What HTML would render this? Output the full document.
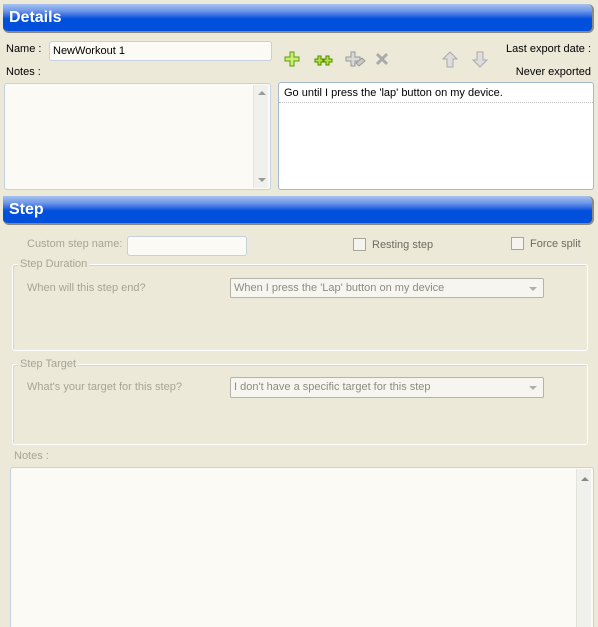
<!DOCTYPE html>
<html style="overflow:hidden;height:627px"><head><meta charset="utf-8"><style>
*{box-sizing:border-box}
body{margin:0;width:598px;height:627px;background:#ece9d8;font-family:"Liberation Sans",sans-serif;font-size:11px;color:#000;position:relative;overflow:hidden}
.a{position:absolute}
.hdr{position:absolute;left:3px;width:591px;height:29px;border-radius:0 6px 6px 6px;border-right:2px solid #8c8a80;border-bottom:2px solid #8c8a80;
background:linear-gradient(#a9c2ef 0%,#6f98e8 25%,#2d66e2 45%,#0050dc 55%,#0050dc 100%);color:#fff;font-weight:bold;font-size:16px;padding:5px 0 0 6px}
.inp{position:absolute;background:#fbfaf5;border:1px solid #c3d1e0;border-radius:3px}
.g{color:#a6a496}
.grp{position:absolute;border:1px solid #fff;border-radius:3px;box-shadow:inset 1px 1px 0 #d8d5c6}
.leg{position:absolute;background:#ece9d8;padding:0 2px;color:#a6a496}
.sel{position:absolute;background:#f6f5ef;border:1px solid #b5b3a8;border-radius:2px;color:#8e8c80;padding:3px 3px;font-size:11px}
.sel:after{content:"";position:absolute;right:6px;top:8px;border:4px solid transparent;border-top:4px solid #b0afa8}
.cb{position:absolute;width:13px;height:13px;border:1px solid #a8a698;background:#f5f4ee}
.sb{position:absolute;background:#f0f0ec;border-left:1px solid #e4e3dc}
</style></head><body>
<div class="hdr" style="top:4px">Details</div>
<div class="a" style="left:6px;top:43px">Name :</div>
<div class="inp" style="left:49px;top:41px;width:223px;height:20px;padding:3px 3px">NewWorkout 1</div>
<div class="a" style="left:6px;top:66px">Notes :</div>
<div class="inp" style="left:4px;top:83px;width:267px;height:107px"><div class="sb" style="left:248px;top:1px;width:15px;height:103px"><div class="a" style="left:4px;top:6px;border:4px solid transparent;border-bottom:4px solid #999;border-top:0"></div><div class="a" style="left:4px;bottom:6px;border:4px solid transparent;border-top:4px solid #999;border-bottom:0"></div></div></div>
<svg class="a" style="left:284px;top:50px" width="210" height="20">
<path d="M6 2h4v5h5v4h-5v5H6v-5H1V7h5z" fill="#c9f06a" stroke="#5a9a10" stroke-width="1"/>
<path d="M34 6h3v3h3v3h-3v3h-3v-3h-3V9h3zM42 6h3v3h3v3h-3v3h-3v-3h-3V9h3z" fill="#b9e040" stroke="#4a8a00" stroke-width="1"/>
<path d="M67 2h4v5h5v4h-5v5h-4v-5h-5V7h5z" fill="#d8d8d8" stroke="#999"/>
<path d="M72 13l6-5 3 3-6 5z" fill="#c8c8c8" stroke="#999"/>
<path d="M93 4l10 10M103 4L93 14" stroke="#aaa" stroke-width="3"/>
<path d="M166 2l7 7h-4v8h-6V9h-4z" fill="#ddd" stroke="#aaa"/>
<path d="M193 2h6v8h4l-7 7-7-7h4z" fill="#ddd" stroke="#aaa"/>
</svg>
<div class="a" style="right:7px;top:43px">Last export date :</div>
<div class="a" style="right:7px;top:66px">Never exported</div>
<div class="inp" style="left:278px;top:82px;width:316px;height:108px;background:#fff;border-color:#a6b8d0">
<div style="padding:4px 5px 3px;border-bottom:1px dotted #bbb">Go until I press the 'lap' button on my device.</div></div>
<div class="hdr" style="top:196px">Step</div>
<div class="a g" style="left:27px;top:238px">Custom step name:</div>
<div class="inp" style="left:127px;top:236px;width:120px;height:20px"></div>
<div class="cb" style="left:353px;top:238px"></div><div class="a g" style="left:372px;top:239px;color:#6d6b60">Resting step</div>
<div class="cb" style="left:511px;top:237px"></div><div class="a g" style="left:530px;top:238px;color:#6d6b60">Force split</div>
<div class="grp" style="left:12px;top:264px;width:576px;height:87px"></div>
<div class="leg" style="left:18px;top:258px">Step Duration</div>
<div class="a g" style="left:27px;top:282px">When will this step end?</div>
<div class="sel" style="left:230px;top:278px;width:314px;height:20px">When I press the 'Lap' button on my device</div>
<div class="grp" style="left:12px;top:364px;width:576px;height:81px"></div>
<div class="leg" style="left:18px;top:358px">Step Target</div>
<div class="a g" style="left:27px;top:381px">What's your target for this step?</div>
<div class="sel" style="left:230px;top:377px;width:314px;height:21px">I don't have a specific target for this step</div>
<div class="a g" style="left:14px;top:450px">Notes :</div>
<div class="inp" style="left:10px;top:467px;width:584px;height:170px"><div class="sb" style="left:565px;top:1px;width:15px;height:170px"><div class="a" style="left:4px;top:8px;border:4px solid transparent;border-bottom:4px solid #888;border-top:0"></div></div></div>
</body></html>
